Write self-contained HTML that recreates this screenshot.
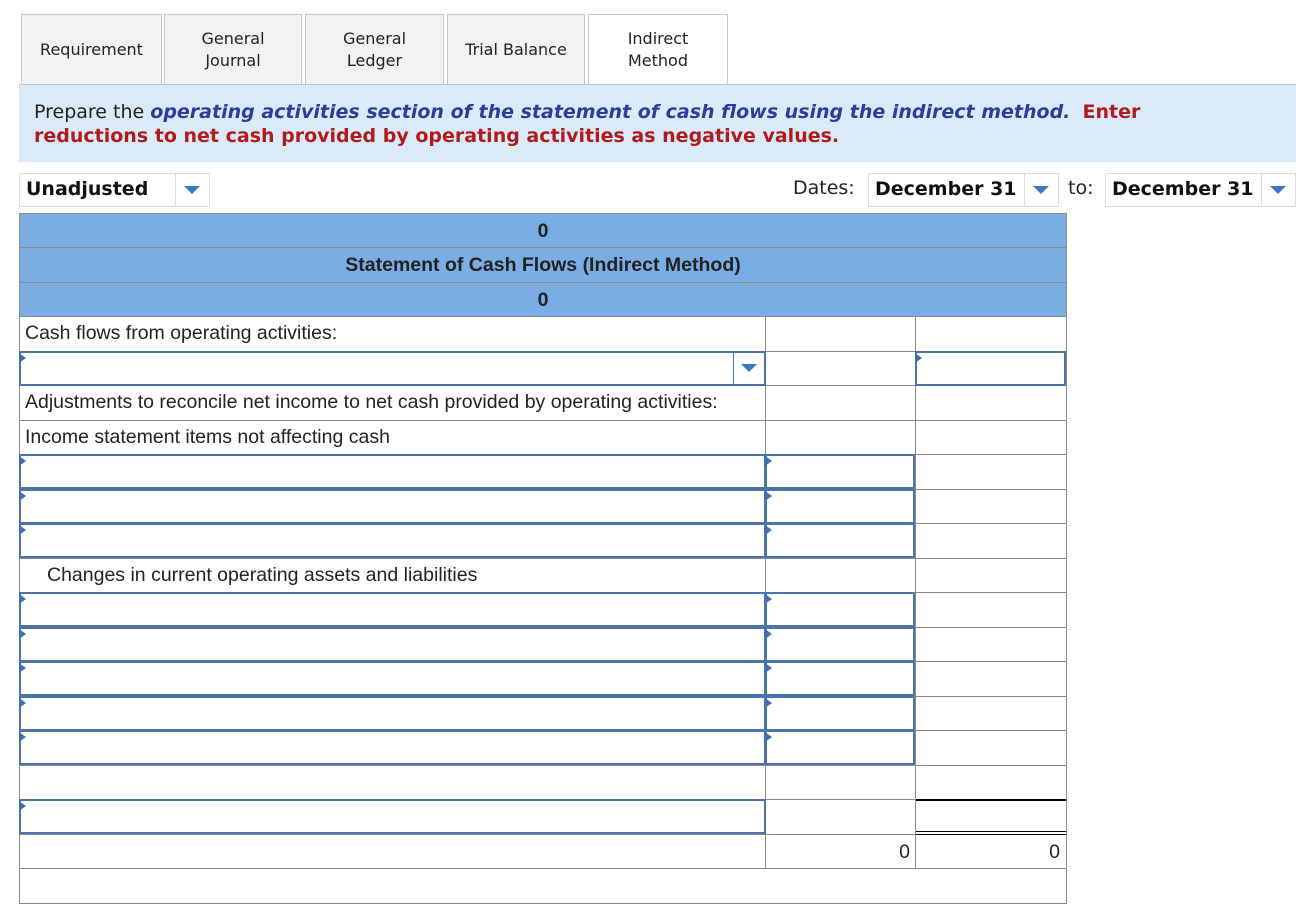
<!DOCTYPE html><html><head><style>
body{margin:0;width:1314px;height:919px;background:#fff;position:relative;overflow:hidden;font-family:"DejaVu Sans","Liberation Sans",sans-serif}
.a{position:absolute;box-sizing:border-box}
.tab{background:#f2f2f2;border:1px solid #c8c8c8;border-bottom:none;display:flex;align-items:center;justify-content:center;text-align:center;font-size:16px;color:#222;line-height:22px;top:14px;height:70px}
.ln{background:#8a8a8a}
.t{font-family:"Liberation Sans",Arial,sans-serif;font-size:19.5px;color:#222}
.inp{border:2.5px solid #4d74aa;background:#fff}
.inp:before{content:"";position:absolute;left:-2px;top:0;border-left:7px solid #3c6fb4;border-top:5px solid transparent;border-bottom:5px solid transparent}
.tri{width:0;height:0;border-left:8px solid transparent;border-right:8px solid transparent;border-top:8px solid #3a78c2}
</style></head><body>
<div class="a tab" style="left:21px;width:141px">Requirement</div>
<div class="a tab" style="left:164px;width:138px">General<br>Journal</div>
<div class="a tab" style="left:305px;width:139px">General<br>Ledger</div>
<div class="a tab" style="left:447px;width:138px">Trial Balance</div>
<div class="a tab" style="left:588px;width:140px;background:#fff;height:71px">Indirect<br>Method</div>
<div class="a" style="left:19px;top:84px;width:1277px;height:78px;background:#dbeaf8;border-top:1px solid #b8c8d8;padding:15px 0 0 15px;font-size:19px;line-height:24px;color:#222">Prepare the <b style="color:#2e3d9c"><i>operating activities section of the statement of cash flows using the indirect method.</i></b>&nbsp; <b style="color:#b01c1c">Enter<br>reductions to net cash provided by operating activities as negative values.</b></div>
<div class="a" style="left:19px;top:173px;width:191px;height:34px;border:1px solid #ddd;font-weight:bold;font-size:19px;padding:4px 0 0 6px;color:#111">Unadjusted</div>
<div class="a" style="left:175px;top:174px;width:1px;height:32px;background:#ddd"></div>
<div class="a tri" style="left:184px;top:186px"></div>
<div class="a" style="left:793px;top:177px;font-size:19px;color:#222">Dates:</div>
<div class="a" style="left:868px;top:173px;width:191px;height:34px;border:1px solid #ddd;font-weight:bold;font-size:19px;padding:4px 0 0 6px;color:#111">December 31</div>
<div class="a" style="left:1024px;top:174px;width:1px;height:32px;background:#ddd"></div>
<div class="a tri" style="left:1033px;top:186px"></div>
<div class="a" style="left:1068px;top:177px;font-size:19px;color:#222">to:</div>
<div class="a" style="left:1105px;top:173px;width:191px;height:34px;border:1px solid #ddd;font-weight:bold;font-size:19px;padding:4px 0 0 6px;color:#111">December 31</div>
<div class="a" style="left:1261px;top:174px;width:1px;height:32px;background:#ddd"></div>
<div class="a tri" style="left:1270px;top:186px"></div>

<div class="a" style="left:19px;top:213px;width:1048px;height:104px;background:#7aade4;border:1px solid #8a8a8a"></div>
<div class="a ln" style="left:19px;top:247px;width:1048px;height:1px"></div>
<div class="a ln" style="left:19px;top:282px;width:1048px;height:1px"></div>
<div class="a t" style="left:19px;top:220px;width:1048px;text-align:center;font-weight:bold">0</div>
<div class="a t" style="left:19px;top:254px;width:1048px;text-align:center;font-weight:bold">Statement of Cash Flows (Indirect Method)</div>
<div class="a t" style="left:19px;top:289px;width:1048px;text-align:center;font-weight:bold">0</div>

<div class="a" style="left:19px;top:317px;width:1048px;height:587px;border:1px solid #8a8a8a;border-top:none"></div>
<div class="a ln" style="left:765px;top:317px;width:1px;height:552px"></div>
<div class="a ln" style="left:915px;top:317px;width:1px;height:552px"></div>
<div class="a ln" style="left:19px;top:351px;width:1048px;height:1px"></div>
<div class="a ln" style="left:19px;top:385px;width:1048px;height:1px"></div>
<div class="a ln" style="left:19px;top:420px;width:1048px;height:1px"></div>
<div class="a ln" style="left:19px;top:454px;width:1048px;height:1px"></div>
<div class="a ln" style="left:19px;top:489px;width:1048px;height:1px"></div>
<div class="a ln" style="left:19px;top:523px;width:1048px;height:1px"></div>
<div class="a ln" style="left:19px;top:558px;width:1048px;height:1px"></div>
<div class="a ln" style="left:19px;top:592px;width:1048px;height:1px"></div>
<div class="a ln" style="left:19px;top:627px;width:1048px;height:1px"></div>
<div class="a ln" style="left:19px;top:661px;width:1048px;height:1px"></div>
<div class="a ln" style="left:19px;top:696px;width:1048px;height:1px"></div>
<div class="a ln" style="left:19px;top:730px;width:1048px;height:1px"></div>
<div class="a ln" style="left:19px;top:765px;width:1048px;height:1px"></div>
<div class="a ln" style="left:19px;top:799px;width:1048px;height:1px"></div>
<div class="a ln" style="left:19px;top:834px;width:1048px;height:1px"></div>
<div class="a ln" style="left:19px;top:868px;width:1048px;height:1px"></div>
<div class="a" style="left:916px;top:799px;width:150px;height:2px;background:#000"></div>
<div class="a" style="left:916px;top:831px;width:150px;height:1px;background:#000"></div>
<div class="a" style="left:916px;top:834px;width:150px;height:1px;background:#000"></div>

<div class="a t" style="left:25px;top:322px">Cash flows from operating activities:</div>
<div class="a t" style="left:25px;top:391px">Adjustments to reconcile net income to net cash provided by operating activities:</div>
<div class="a t" style="left:25px;top:426px">Income statement items not affecting cash</div>
<div class="a t" style="left:47px;top:564px">Changes in current operating assets and liabilities</div>
<div class="a t" style="left:766px;top:841px;width:144px;text-align:right">0</div>
<div class="a t" style="left:916px;top:841px;width:144px;text-align:right">0</div>

<div class="a inp" style="left:19px;top:351px;width:747px;height:35px"></div>
<div class="a" style="left:733px;top:353px;width:1px;height:31px;background:#4d74aa"></div>
<div class="a tri" style="left:741px;top:364px"></div>
<div class="a inp" style="left:915px;top:351px;width:151px;height:35px"></div>

<div class="a inp" style="left:19px;top:454px;width:747px;height:35px"></div>
<div class="a inp" style="left:765px;top:454px;width:150px;height:35px"></div>
<div class="a inp" style="left:19px;top:489px;width:747px;height:35px"></div>
<div class="a inp" style="left:765px;top:489px;width:150px;height:35px"></div>
<div class="a inp" style="left:19px;top:523px;width:747px;height:35px"></div>
<div class="a inp" style="left:765px;top:523px;width:150px;height:35px"></div>

<div class="a inp" style="left:19px;top:592px;width:747px;height:35px"></div>
<div class="a inp" style="left:765px;top:592px;width:150px;height:35px"></div>
<div class="a inp" style="left:19px;top:627px;width:747px;height:35px"></div>
<div class="a inp" style="left:765px;top:627px;width:150px;height:35px"></div>
<div class="a inp" style="left:19px;top:661px;width:747px;height:35px"></div>
<div class="a inp" style="left:765px;top:661px;width:150px;height:35px"></div>
<div class="a inp" style="left:19px;top:696px;width:747px;height:35px"></div>
<div class="a inp" style="left:765px;top:696px;width:150px;height:35px"></div>
<div class="a inp" style="left:19px;top:730px;width:747px;height:35px"></div>
<div class="a inp" style="left:765px;top:730px;width:150px;height:35px"></div>

<div class="a inp" style="left:19px;top:799px;width:747px;height:35px"></div>
</body></html>
